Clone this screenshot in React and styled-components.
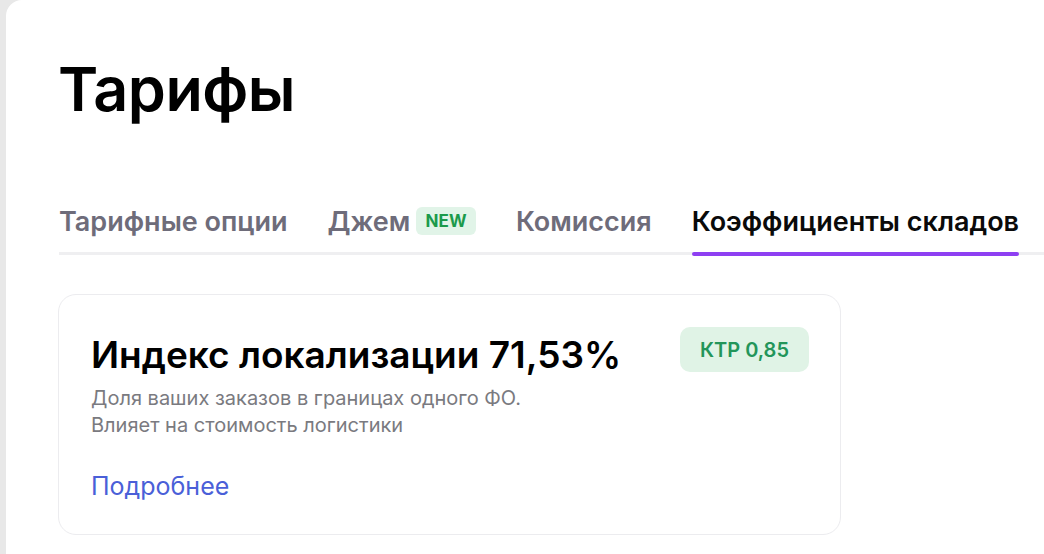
import React from "react";
import styled, { createGlobalStyle } from "styled-components";

const GlobalStyle = createGlobalStyle`
    html, body{
        margin: 0;
        padding: 0;
        background: #e8e8e8;
        font-family: Inter, "Noto Sans", sans-serif;
        overflow: hidden;
    }
`;

const tabs = [
    { label: "Тарифные опции" },
    { label: "Джем", badge: "NEW" },
    { label: "Комиссия" },
    { label: "Коэффициенты складов", active: true },
];

const App = () => {
    return(
        <>
            <GlobalStyle />
            <Page>
                <Title>Тарифы</Title>
                <TabBar>
                    {tabs.map((t) => (
                        <Tab key={t.label} active={t.active}>
                            {t.label}
                            {t.badge && <NewBadge>{t.badge}</NewBadge>}
                        </Tab>
                    ))}
                </TabBar>
                <Card>
                    <CardHead>
                        <CardTitle>Индекс локализации 71,53%</CardTitle>
                        <Chip>КТР 0,85</Chip>
                    </CardHead>
                    <CardText>
                        Доля ваших заказов в границах одного ФО.<br />
                        Влияет на стоимость логистики
                    </CardText>
                    <MoreLink href="#">Подробнее</MoreLink>
                </Card>
            </Page>
        </>
    )
}

const Page = styled.div`
    margin-left: 6px;
    height: 100vh;
    background: #fff;
    border-top-left-radius: 16px;
    padding: 49px 0 0 52px;
    box-sizing: border-box;
`;

const Title = styled.h1`
    margin: 0;
    font-size: 61px;
    font-weight: 600;
    line-height: 80px;
    color: #000;
    letter-spacing: -0.5px;
`;

const TabBar = styled.div`
    display: flex;
    gap: 40px;
    margin-top: 70px;
    margin-left: 1px;
    border-bottom: 3px solid #efeff1;
`;

const Tab = styled.div`
    position: relative;
    display: flex;
    align-items: center;
    gap: 6px;
    height: 44px;
    padding-bottom: 9px;
    font-size: 27px;
    font-weight: 600;
    color: ${(p) => (p.active ? "#0a0a0a" : "#6e6c7a")};
    white-space: nowrap;
    &::after{
        content: "";
        display: ${(p) => (p.active ? "block" : "none")};
        position: absolute;
        left: 0;
        right: 0;
        bottom: -4px;
        height: 4px;
        border-radius: 2px;
        background: #8e3ff2;
    }
`;

const NewBadge = styled.span`
    font-size: 17px;
    line-height: 18px;
    font-weight: 700;
    color: #1b9a4b;
    background: #e1f4e8;
    border-radius: 6px;
    padding: 5px 9px;
    letter-spacing: 0.2px;
`;

const Card = styled.div`
    width: 783px;
    margin-top: 39px;
    box-sizing: border-box;
    border: 1px solid #ececef;
    border-radius: 18px;
    padding: 32px 31px 33px 32px;
`;

const CardHead = styled.div`
    display: flex;
    justify-content: space-between;
    align-items: flex-start;
`;

const CardTitle = styled.h2`
    margin: 6px 0 0;
    font-size: 37px;
    font-weight: 600;
    line-height: 44px;
    color: #000;
`;

const Chip = styled.div`
    font-size: 20px;
    line-height: 24px;
    font-weight: 600;
    color: #23955a;
    background: #e0f3e6;
    border-radius: 10px;
    padding: 11px 20px 10px;
`;

const CardText = styled.p`
    margin: 8px 0 0;
    font-size: 20px;
    line-height: 27px;
    color: #7a7a80;
`;

const MoreLink = styled.a`
    display: block;
    margin-top: 32px;
    font-size: 25px;
    line-height: 30px;
    color: #4a5fd8;
    text-decoration: none;
`;

export default App;
